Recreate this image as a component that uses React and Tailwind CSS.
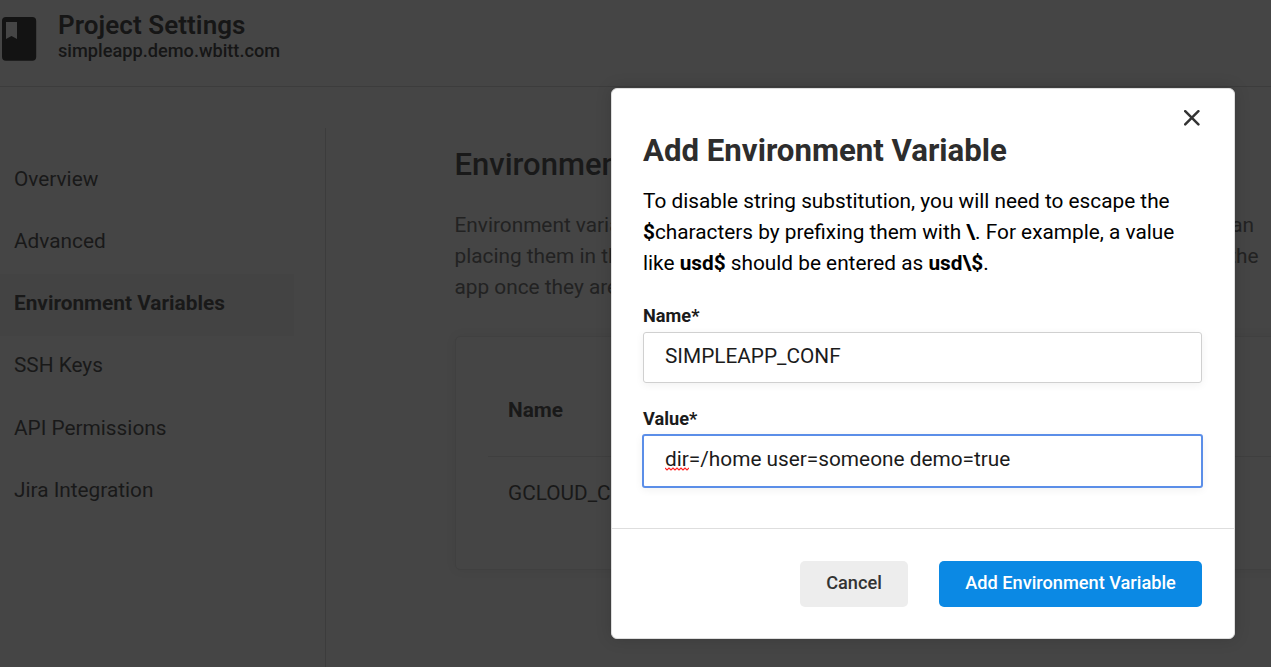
const navItems = [
  "Overview",
  "Advanced",
  "Environment Variables",
  "SSH Keys",
  "API Permissions",
  "Jira Integration",
];

function BookIcon() {
  return (
    <svg className="mt-[17px] ml-[2px] h-[44px] w-[35px] shrink-0" viewBox="0 0 35 44">
      <rect width="34.2" height="43.700" rx="4" fill="#131313" />
      <path d="M4 5h11v17l-5.500-3-5.500 3z" fill="#454545" />
    </svg>
  );
}

function CloseIcon() {
  return (
    <svg className="h-[16px] w-[16px]" viewBox="0 0 16 16" fill="none" stroke="#333" strokeWidth="2.5" strokeLinecap="round">
      <path d="M1.200 1.200l13.200 13.200M14.400 1.200l-13.200 13.200" />
    </svg>
  );
}

function Header() {
  return (
    <header className="flex h-[87px] border-b border-[#3c3c3c]">
      <BookIcon />
      <div className="ml-[21px] pt-[10px] text-[#161616]">
        <h1 className="text-[26px] leading-[30px] font-semibold tracking-[0.060px]">Project Settings</h1>
        <p className="text-[18.200px] leading-[22px] font-medium">simpleapp.demo.wbitt.com</p>
      </div>
    </header>
  );
}

function Sidebar() {
  return (
    <aside className="mt-[41px] w-[326px] border-r border-[#3c3c3c] pt-[21.500px]">
      <nav className="w-[294px] text-[20.800px]">
        {navItems.map((item) => (
          <div
            key={item}
            className={
              item === "Environment Variables"
                ? "flex h-[62.300px] items-center bg-[#434343] pb-[3px] pl-[14px] font-bold"
                : "flex h-[62.300px] items-center pb-[3px] pl-[14px]"
            }
          >
            {item}
          </div>
        ))}
      </nav>
    </aside>
  );
}

function Content() {
  return (
    <main className="ml-[128.500px] w-[816px] shrink-0 pt-[59px]">
      <h2 className="text-[31px] leading-[38px] font-medium whitespace-nowrap">Environment Variables</h2>
      <div className="mt-[26px] w-[804px] text-[20.800px] leading-[31px] text-[#222]">
        <p className="flex w-[799.500px] justify-between"><span>Environment variables</span><span>can</span></p>
        <p className="flex justify-between"><span>placing them in the</span><span>the</span></p>
        <p>app once they are</p>
      </div>
      <section className="mt-[33px] h-[234px] w-[860px] rounded-[5px] border border-[#404040] pt-[32px] pl-[32px] text-[20.800px] shadow-[0_0_12px_rgba(0,0,0,0.05)]">
        <div className="flex h-[88px] items-center border-b border-[#3f3f3f] pb-[4px] pl-[20.500px] font-bold">Name</div>
        <div className="flex h-[74px] items-center pl-[20.500px]">GCLOUD_CONF</div>
      </section>
    </main>
  );
}

function Dialog() {
  return (
    <div role="dialog" className="absolute top-[88px] left-[611px] flex h-[551px] w-[624px] flex-col rounded-[6px] border border-[#dedede] bg-white text-[#1b1b1b] shadow-[0_0_16px_rgba(0,0,0,0.15)]">
      <div className="flex h-[440px] flex-col border-b border-[#dedede] pr-[32px] pl-[31px]">
        <div className="flex h-[42px] items-end justify-end pr-[2.500px] pb-[5.500px]">
          <button><CloseIcon /></button>
        </div>
        <h2 className="text-[31.200px] leading-[40px] font-bold text-[#2d2d2d]">Add Environment Variable</h2>
        <p className="mt-[15px] text-[20.800px] leading-[31px] whitespace-nowrap text-black">
          To disable string substitution, you will need to escape the<br />
          <b>$</b>characters by prefixing them with <b>\</b>. For example, a value<br />
          like <b>usd$</b> should be entered as <b>usd\$</b>.
        </p>
        <label className="mt-[27px] text-[18.200px] leading-[20px] font-bold">Name*</label>
        <div className="mt-[6px] flex h-[51px] shrink-0 items-center rounded-[3px] border border-[#d0d0d0] pb-[2px] pl-[21px] text-[20.800px] shadow-[0_2px_8px_rgba(0,0,0,0.06)]">
          SIMPLEAPP_CONF
        </div>
        <label className="mt-[26px] text-[18.200px] leading-[20px] font-bold">Value*</label>
        <div className="-mx-px mt-[5px] flex h-[54px] shrink-0 items-center rounded-[3px] border-2 border-[#5b8ee8] pb-[3px] pl-[21px] text-[20.800px] shadow-[0_2px_8px_rgba(0,0,0,0.06)]">
          <span className="relative">
            dir
            <svg className="absolute top-[23px] left-0 h-[4px] w-[24px]" viewBox="0 0 24 4" fill="none" stroke="#f22" strokeWidth="1.100">
              <path d="M0 1l2 2 2-2 2 2 2-2 2 2 2-2 2 2 2-2 2 2 2-2 2 2 2-2" />
            </svg>
          </span>
          =/home user=someone demo=true
        </div>
      </div>
      <div className="flex flex-1 justify-end gap-[31px] pt-[32px] pr-[32px] text-[18.200px] font-medium">
        <button className="h-[46px] w-[108px] rounded-[5px] bg-[#ededed] pb-[3px] text-[#333]">Cancel</button>
        <button className="h-[46px] w-[263px] rounded-[5px] bg-[#0b89e4] pb-[3px] text-white">Add Environment Variable</button>
      </div>
    </div>
  );
}

export default function App() {
  return (
    <div className="relative h-[667px] w-[1271px] overflow-hidden bg-[#454545] font-[Roboto,sans-serif] text-[#191919]">
      <Header />
      <div className="flex h-[580px]">
        <Sidebar />
        <Content />
      </div>
      <Dialog />
    </div>
  );
}
